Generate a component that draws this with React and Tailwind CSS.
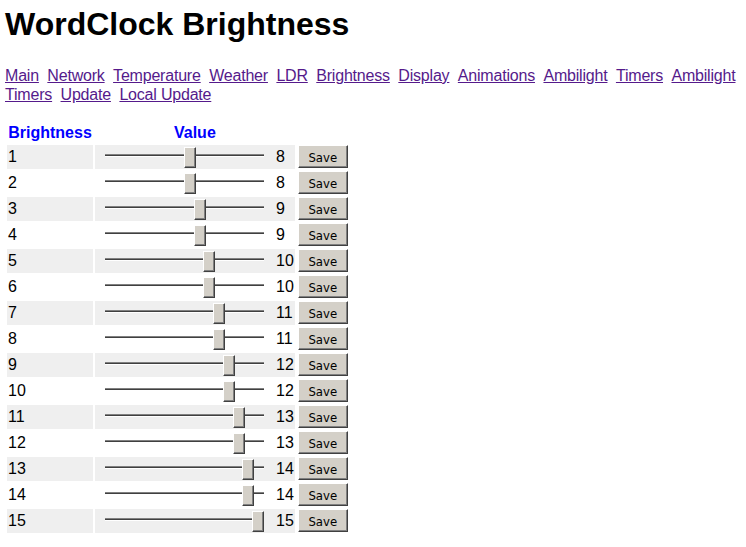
import { Fragment } from 'react';

// "Ambilight Timers" wraps over the line end, so it is given as two parts
const links = [
  ['Main'], ['Network'], ['Temperature'], ['Weather'], ['LDR'], ['Brightness'], ['Display'],
  ['Animations'], ['Ambilight'], ['Timers'], ['Ambilight', 'Timers'], ['Update'], ['Local Update'],
];

const levels = [8, 8, 9, 9, 10, 10, 11, 11, 12, 12, 13, 13, 14, 14, 15];

function Slider({ value }) {
  return (
    <div className="relative h-[21px] w-[159px] shrink-0">
      <div className="absolute left-0 right-0 top-[7px] h-[3px] border-y border-t-[#808080] border-b-white bg-[#404040]" />
      <div
        className="absolute top-0 h-[21px] w-[12px] border border-t-white border-l-white border-r-[#404040] border-b-[#404040] bg-[#d4d0c8] shadow-[inset_-1px_-1px_0_#808080]"
        style={{ left: 1 + (value * 146) / 15 }}
      />
    </div>
  );
}

function SaveButton() {
  return (
    <button className="flex h-[23px] w-[50px] items-center justify-center border border-t-white border-l-white border-r-[#404040] border-b-[#404040] bg-[#d4d0c8] pt-[1px] font-['DejaVu_Sans_Condensed','DejaVu_Sans',sans-serif] text-[13px] leading-[15px] text-black shadow-[inset_-1px_-1px_0_#808080]">
      Save
    </button>
  );
}

export default function App() {
  return (
    <div className="min-h-[547px] bg-white px-[5px] pt-[6px] font-['Liberation_Sans',Arial,sans-serif] text-black">
      <h1 className="m-0 text-[32px] font-bold leading-[36px]">WordClock Brightness</h1>

      <nav className="mt-[24px] text-[16px] leading-[19px]">
        {links.map((parts, i) => (
          <Fragment key={i}>
            {parts.map((part, j) => (
              <Fragment key={j}>
                <a
                  href="#"
                  className={`tracking-[-0.2px] text-[#551a8b] underline ${j === parts.length - 1 ? 'mr-[4px]' : ''}`}
                >
                  {part}
                </a>{' '}
              </Fragment>
            ))}
          </Fragment>
        ))}
      </nav>

      <table className="mt-[17px] border-separate border-spacing-[2px] text-[16px] leading-[18px]">
        <thead>
          <tr>
            <th className="h-[20px] w-[86px] p-[1px] text-center font-bold text-[#0000ff]">Brightness</th>
            <th className="h-[20px] w-[198px] p-[1px] text-center font-bold text-[#0000ff]">Value</th>
            <th className="p-0" />
          </tr>
        </thead>
        <tbody>
          {levels.map((value, i) => {
            const bg = i % 2 === 0 ? 'bg-[#efefef]' : 'bg-white';
            return (
              <tr key={i}>
                <td className={`h-[24px] p-[1px] align-middle ${bg}`}>{i + 1}</td>
                <td className={`h-[24px] p-[1px] align-middle ${bg}`}>
                  <div className="flex items-center gap-[12px] pl-[9px]">
                    <Slider value={value} />
                    <span>{value}</span>
                  </div>
                </td>
                <td className="h-[24px] p-0 pl-[1px] align-top">
                  <SaveButton />
                </td>
              </tr>
            );
          })}
        </tbody>
      </table>
    </div>
  );
}
